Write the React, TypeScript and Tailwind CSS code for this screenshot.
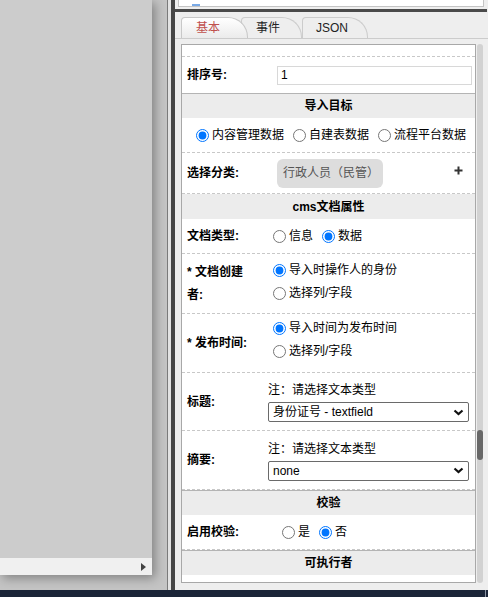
import React from 'react';

function Radio({ name, checked, label }: { name: string; checked?: boolean; label: string }) {
  return (
    <label className="flex items-center gap-[3px] whitespace-nowrap">
      <input type="radio" name={name} defaultChecked={checked} className="w-[13px] h-[13px] m-0" />
      <span>{label}</span>
    </label>
  );
}

function SectionHeader({ title, line = true }: { title: string; line?: boolean }) {
  return (
    <div
      className={`h-[25px] bg-[#ececec] flex items-center justify-center font-bold ${
        line ? 'border-t border-[#b4b4b4]' : 'h-[24px]'
      }`}
    >
      {title}
    </div>
  );
}

function Select({ value }: { value: string }) {
  return (
    <div className="w-[201px] h-[20px] border border-[#6a6a6a] rounded-[2px] bg-white flex items-center pl-[4px] pr-[4px]">
      <span className="flex-1">{value}</span>
      <svg width="11" height="7" viewBox="0 0 11 7">
        <path d="M1.5 1.5 L5.5 5 L9.5 1.5" fill="none" stroke="#111" strokeWidth="2.2" />
      </svg>
    </div>
  );
}

export default function App() {
  return (
    <div className="w-[488px] h-[597px] flex flex-col overflow-hidden bg-[#c4c4c4] text-[12px] text-black font-['Liberation_Sans','Noto_Sans_CJK_SC',sans-serif]">
      <div className="flex flex-1 min-h-0">
        {/* left floating window */}
        <div className="w-[167px] shrink-0">
          <div className="w-[152px] h-[575px] bg-[#cccccc] flex flex-col justify-end shadow-[3px_3px_10px_rgba(0,0,0,0.35)]">
            <div className="h-[17px] bg-[#f0f0f0] flex items-center justify-end pr-[6px]">
              <svg width="5" height="8" viewBox="0 0 5 8">
                <path d="M0 0 L5 4 L0 8 Z" fill="#444" />
              </svg>
            </div>
          </div>
        </div>
        <div className="w-px bg-[#7a7a7a]" />
        <div className="w-[3px] bg-[#e2e2e2]" />
        <div className="w-[4px] bg-[#464646]" />

        {/* right panel */}
        <div className="flex-1 bg-[#eeeeee] flex flex-col">
          <div className="ml-[3px] mr-[4px] h-[7px] bg-white border-x border-b border-[#c4c4c4] pl-[13px] pt-[4px]">
            <div className="w-[8px] h-[2px] bg-[#7aaae6]" />
          </div>
          <div className="mt-[2px] mr-px h-[3px] bg-[#4a4a4a]" />

          {/* tabs */}
          <div className="flex h-[21px] mt-[5px] pl-[6px]">
            <div className="relative z-10 w-[67px] h-full rounded-tl-[4px] rounded-tr-[20px] border border-b-0 border-[#c8c8c8] bg-gradient-to-b from-white to-[#ebebeb] pl-[14px] leading-[20px] text-[#c0504d]">
              基本
            </div>
            <div className="-ml-[7px] w-[61px] h-full rounded-tl-[4px] rounded-tr-[20px] border border-b-0 border-[#cccccc] bg-[#eeeeee] pl-[14px] leading-[20px] text-[#222]">
              事件
            </div>
            <div className="w-[66px] h-full rounded-tl-[4px] rounded-tr-[20px] border border-b-0 border-[#cccccc] bg-[#eeeeee] pl-[13px] leading-[20px] text-[#222]">
              JSON
            </div>
          </div>
          <div className="h-px bg-[#cccccc]" />

          {/* form panel + scrollbar */}
          <div className="flex flex-1 min-h-0 mt-[5px] mb-[7px] ml-[6px]">
            <div className="w-[295px] border border-[#a8a8a8] bg-white flex flex-col overflow-hidden">
              <div className="h-[12px] shrink-0 border-b border-dashed border-[#c8c8c8]" />

              <div className="h-[36px] shrink-0 flex items-center">
                <div className="w-[95px] pl-[5px] font-bold">排序号:</div>
                <div className="w-[195px] h-[19px] border border-[#d8d8d8] pl-[3px] leading-[17px]">1</div>
              </div>

              <SectionHeader title="导入目标" />
              <div className="h-[35px] shrink-0 flex items-center gap-[9px] pl-[14px] border-b border-dashed border-[#c8c8c8]">
                <Radio name="target" checked label="内容管理数据" />
                <Radio name="target" label="自建表数据" />
                <Radio name="target" label="流程平台数据" />
              </div>

              <div className="h-[41px] shrink-0 flex items-center border-b border-dashed border-[#c8c8c8]">
                <div className="w-[95px] pl-[5px] font-bold">选择分类:</div>
                <div className="w-[106px] h-[29px] bg-[#dddddd] rounded-[6px] pl-[6px] flex items-center text-[#555] whitespace-nowrap">
                  行政人员（民管）
                </div>
                <svg className="ml-auto mr-[12px] mb-[5px]" width="9" height="9" viewBox="0 0 9 9">
                  <path d="M4.5 0.5 V8.5 M0.5 4.5 H8.5" stroke="#333" strokeWidth="2" />
                </svg>
              </div>

              <SectionHeader title="cms文档属性" line={false} />
              <div className="h-[35px] shrink-0 flex items-center border-b border-dashed border-[#c8c8c8]">
                <div className="w-[86px] pl-[5px] font-bold">文档类型:</div>
                <div className="flex items-center gap-[9px] pl-[5px]">
                  <Radio name="doctype" label="信息" />
                  <Radio name="doctype" checked label="数据" />
                </div>
              </div>

              <div className="h-[60px] shrink-0 flex items-center border-b border-dashed border-[#c8c8c8]">
                <div className="w-[86px] pl-[5px] font-bold leading-[23px]">
                  * 文档创建
                  <br />
                  者:
                </div>
                <div className="flex flex-col gap-[10px] pl-[5px] leading-[13px] mb-[3px]">
                  <Radio name="creator" checked label="导入时操作人的身份" />
                  <Radio name="creator" label="选择列/字段" />
                </div>
              </div>

              <div className="h-[59px] shrink-0 flex items-center border-b border-dashed border-[#c8c8c8]">
                <div className="w-[86px] pl-[5px] font-bold">* 发布时间:</div>
                <div className="flex flex-col gap-[10px] pl-[5px] leading-[13px] mb-[7px]">
                  <Radio name="pubtime" checked label="导入时间为发布时间" />
                  <Radio name="pubtime" label="选择列/字段" />
                </div>
              </div>

              <div className="h-[58px] shrink-0 flex items-center border-b border-dashed border-[#c8c8c8]">
                <div className="w-[86px] pl-[5px] font-bold">标题:</div>
                <div className="flex flex-col gap-[3px]">
                  <div className="leading-[18px]">注：请选择文本类型</div>
                  <Select value="身份证号 - textfield" />
                </div>
              </div>

              <div className="h-[59px] shrink-0 flex items-center border-b border-dashed border-[#c8c8c8]">
                <div className="w-[86px] pl-[5px] font-bold">摘要:</div>
                <div className="flex flex-col gap-[3px]">
                  <div className="leading-[18px]">注：请选择文本类型</div>
                  <Select value="none" />
                </div>
              </div>

              <SectionHeader title="校验" />
              <div className="h-[35px] shrink-0 flex items-center border-b border-dashed border-[#c8c8c8]">
                <div className="w-[95px] pl-[5px] font-bold">启用校验:</div>
                <div className="flex items-center gap-[9px] pl-[5px]">
                  <Radio name="check" label="是" />
                  <Radio name="check" checked label="否" />
                </div>
              </div>

              <SectionHeader title="可执行者" />
              <div className="flex-1" />
            </div>

            {/* scrollbar */}
            <div className="ml-px w-[6px] bg-[#d2d2d2] rounded-[3px] flex flex-col">
              <div className="h-[386px] shrink-0" />
              <div className="h-[30px] bg-[#686868] rounded-[3px]" />
            </div>
          </div>
        </div>
      </div>

      {/* taskbar */}
      <div className="h-[7px] bg-[#1b2538] flex justify-end">
        <div className="w-px bg-[#8a93a3] mr-[2px]" />
      </div>
    </div>
  );
}
